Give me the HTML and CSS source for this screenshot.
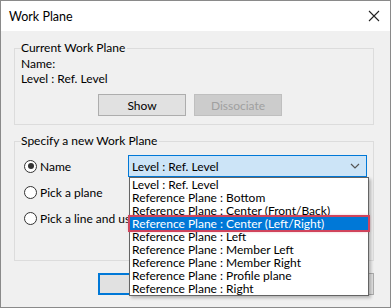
FILE: index.html
```html
<!DOCTYPE html>
<html lang="en">

<head>
    <meta charset="UTF-8">
    <meta name="viewport" content="width=device-width, initial-scale=1.0">
    <title>Work Plane</title>
    <link rel="stylesheet" href="styles.css">
</head>

<body>
    <div class="window">
        <div class="titlebar">
            <span class="title">Work Plane</span>
            <svg class="close" width="12" height="12" viewBox="0 0 12 12">
                <path d="M1 1 L11 11 M11 1 L1 11" stroke="#222" stroke-width="1.1" fill="none" />
            </svg>
        </div>

        <div class="content">
            <div class="group current">
                <div class="group-title">Current Work Plane</div>
                <div class="line first">Name:</div>
                <div class="line">Level : Ref. Level</div>
                <div class="buttons">
                    <button type="button" class="btn">Show</button>
                    <button type="button" class="btn disabled">Dissociate</button>
                </div>
            </div>

            <div class="group specify">
                <div class="group-title">Specify a new Work Plane</div>

                <div class="row first">
                    <label class="radio"><span class="dot checked"></span>Name</label>
                    <div class="combo">
                        <span>Level : Ref. Level</span>
                        <svg class="chevron" width="10" height="6" viewBox="0 0 10 6">
                            <path d="M1 1 L5 5 L9 1" stroke="#555" stroke-width="1.2" fill="none" />
                        </svg>
                        <!-- open list lies over the rest of the dialog -->
                        <ul class="list">
                            <li>Level : Ref. Level</li>
                            <li>Reference Plane : Bottom</li>
                            <li>Reference Plane : Center (Front/Back)</li>
                            <li class="selected">Reference Plane : Center (Left/Right)</li>
                            <li>Reference Plane : Left</li>
                            <li>Reference Plane : Member Left</li>
                            <li>Reference Plane : Member Right</li>
                            <li>Reference Plane : Profile plane</li>
                            <li>Reference Plane : Right</li>
                        </ul>
                    </div>
                </div>
                <div class="row">
                    <label class="radio"><span class="dot"></span>Pick a plane</label>
                </div>
                <div class="row">
                    <label class="radio clipped"><span class="dot"></span>Pick a line and use</label>
                </div>
            </div>

            <!-- OK / Cancel / Help sit behind the open list -->
            <div class="buttons footer">
                <button type="button" class="btn default"></button>
                <button type="button" class="btn"></button>
                <button type="button" class="btn"></button>
            </div>
        </div>
    </div>
</body>

</html>
```

FILE: styles.css
```css
body {
    margin: 0;
    font-family: 'Segoe UI', Lato, sans-serif;
    font-size: 12px;
    color: #000;
    background-color: #fff;
}

.window {
    width: 389px;
    height: 306px;
    border: 1px solid #8a8a8a;
    background-color: #f0f0f0;
    overflow: hidden;
}

.titlebar {
    height: 30px;
    background-color: #fff;
    display: flex;
    align-items: center;
    justify-content: space-between;
    padding: 0 9px 0 8px;
}

.title {
    font-size: 12.5px;
}

.close {
    margin-right: 1px;
}

.content {
    padding: 17px 16px 0 13px;
}

.group {
    border: 1px solid #dcdcdc;
    padding: 0 6px 8px 6px;
}

.group-title {
    display: block;
    width: fit-content;
    margin-top: -9px;
    height: 15px;
    line-height: 15px;
    background-color: #f0f0f0;
    padding-right: 2px;
}

.line {
    height: 15px;
    line-height: 15px;
}

.line.first {
    margin-top: 1px;
}

.buttons {
    display: flex;
    gap: 8px;
    margin-top: 8px;
    padding-left: 77px;
}

.btn {
    width: 88px;
    height: 22px;
    padding: 0;
    font-family: inherit;
    font-size: 12px;
    color: #000;
    background-color: #e1e1e1;
    border: 1px solid #adadad;
}

.btn.disabled {
    color: #a0a0a0;
    background-color: #cccccc;
    border-color: #bfbfbf;
}

.btn.default {
    border: 2px solid #0078d7;
}

.specify {
    margin-top: 16px;
    padding-bottom: 31px;
}

.row {
    display: flex;
    align-items: center;
    height: 22px;
    margin-top: 4px;
    margin-left: 3px;
    white-space: nowrap;
}

.row.first {
    margin-top: 7px;
}

.radio {
    display: flex;
    align-items: center;
    width: 104px;
    flex-shrink: 0;
}

.radio.clipped {
    overflow: hidden;
}

.dot {
    flex-shrink: 0;
    width: 11px;
    height: 11px;
    border: 1px solid #333;
    border-radius: 50%;
    background-color: #fff;
    margin-right: 3px;
    position: relative;
}

.dot.checked::after {
    content: '';
    position: absolute;
    left: 2.5px;
    top: 2.5px;
    width: 6px;
    height: 6px;
    border-radius: 50%;
    background-color: #333;
}

.combo {
    position: relative;
    width: 237px;
    height: 20px;
    border: 1px solid #0078d7;
    background-color: #cce4f7;
    display: flex;
    align-items: center;
    padding-left: 3px;
}

.combo span {
    flex: 1;
}

.chevron {
    margin-right: 6px;
}

.list {
    position: absolute;
    left: 0;
    top: 21px;
    width: 238px;
    margin: 0;
    padding: 0;
    list-style: none;
    background-color: #fff;
    border: 1px solid #646464;
    box-shadow: 2px 2px 3px rgba(0, 0, 0, 0.25);
    z-index: 2;
}

.list li {
    height: 13px;
    line-height: 13px;
    padding-left: 2px;
}

.list li.selected {
    background-color: #0078d7;
    color: #fff;
    outline: 2px solid #d0445c;
    box-shadow: 0 0 3px 1px rgba(208, 68, 92, 0.6);
}

.footer {
    margin-top: 12px;
    padding-left: 84px;
}
```
